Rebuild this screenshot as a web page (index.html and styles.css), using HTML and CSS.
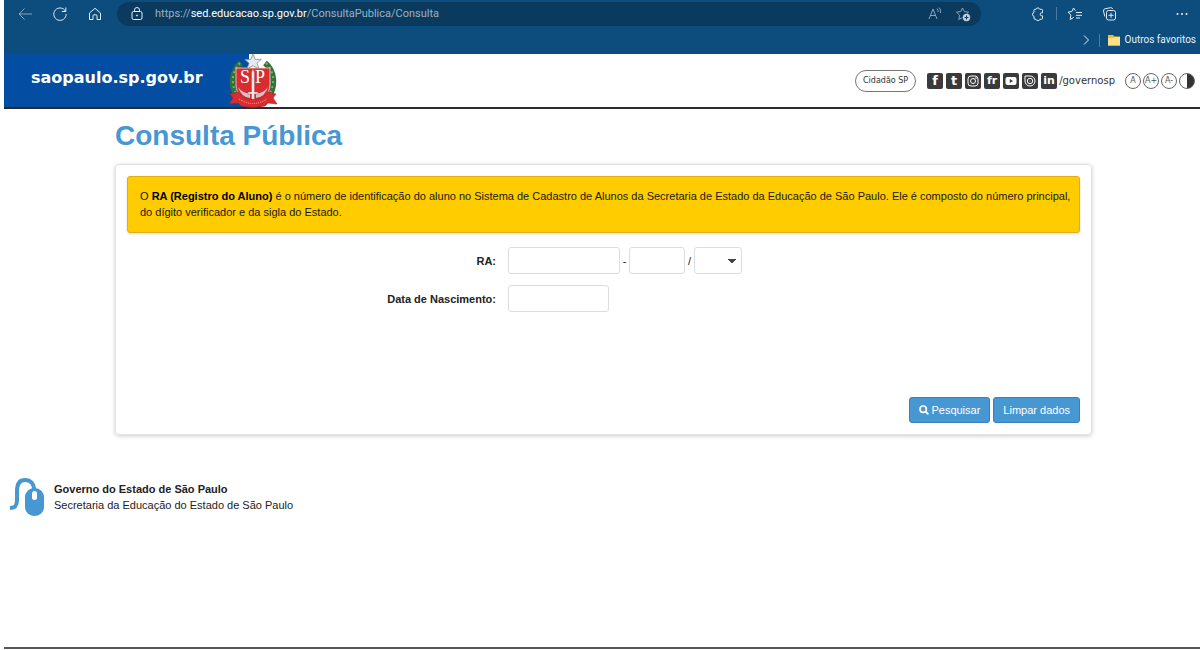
FILE: index.html
```html
<!DOCTYPE html>
<html lang="pt-BR">
<head>
<meta charset="utf-8">
<title>Consulta Pública</title>
<link rel="stylesheet" href="styles.css">
</head>
<body>
<div class="browser">
  <div class="toolbar">
    <button class="tool" aria-label="Voltar"><svg class="dim" viewBox="0 0 16 16"><path d="M15 8H2M7.500 2.500L2 8l5.500 5.500"/></svg></button>
    <button class="tool" aria-label="Atualizar"><svg viewBox="0 0 16 16"><path d="M13.500 5.300A6.200 6.200 0 1 0 14.200 8M13.800 1.500v4h-4"/></svg></button>
    <button class="tool" aria-label="Início"><svg viewBox="0 0 16 16"><path d="M2.500 7L8 2.300 13.500 7v6.500H10V9.800a1 1 0 0 0-1-1H7a1 1 0 0 0-1 1v3.700H2.500z"/></svg></button>
    <div class="address">
      <svg class="lock" viewBox="0 0 16 16"><rect x="3" y="5.500" width="10" height="8" rx="1.500"/><path d="M5.500 5.500V4a2.500 2.500 0 0 1 5 0v1.500"/><circle cx="8" cy="9.500" r=".6"/></svg>
      <span class="url">https://<b>sed.educacao.sp.gov.br</b>/ConsultaPublica/Consulta</span>
      <svg class="dim" viewBox="0 0 16 16"><path d="M2 13L6 3l4 10M3.500 9.500h5M10 2.500q1.500 1.500 1 3.500M12.200 1.500q2.200 2.500 1.300 5.500"/></svg>
      <svg class="dim" viewBox="0 0 16 16"><path d="M7.500 11.500L3.800 13.500l.8-4.300L1.500 6.200l4.200-.6L7.500 2l1.900 3.600 4.100.6-1.500 1.400"/><circle class="disc" cx="11.500" cy="11.500" r="3.700"/><path class="mark" d="M11.500 9.500v4M9.500 11.500h4"/></svg>
    </div>
    <button class="tool puzzle" aria-label="Extensões"><svg viewBox="0 0 16 16"><path d="M5 3.300h1a2 2 0 0 1 3.800 0h1.700a1 1 0 0 1 1 1v2.500h-.8a1.500 1.500 0 0 0 0 3h.8v2.500a1 1 0 0 1-1 1H9.800a2 2 0 0 1-3.800 0H5a1 1 0 0 1-1-1v-2a2 2 0 0 1 0-3.900V4.300a1 1 0 0 1 1-1z"/></svg></button>
    <span class="rule"></span>
    <button class="tool" aria-label="Favoritos"><svg viewBox="0 0 16 16"><path d="M8.500 4.800L6.500 2 4.900 5.500l-3.900.6 2.900 3-.7 4.400 3.500-2.100M9 6.500h6M9 9.300h6M9 12h4"/></svg></button>
    <button class="tool coll" aria-label="Coleções"><svg viewBox="0 0 16 16"><rect x="4.500" y="4.500" width="9" height="9.500" rx="2"/><path d="M9 6.800v5M6.500 9.300h5M2.800 10.500L1.500 5a2 2 0 0 1 1.500-2.200L8.500 1.700a2 2 0 0 1 2.200 1.300"/></svg></button>
    <button class="tool more" aria-label="Mais"><svg viewBox="0 0 16 16"><g class="solid"><circle cx="3.500" cy="8" r="1"/><circle cx="8" cy="8" r="1"/><circle cx="12.500" cy="8" r="1"/></g></svg></button>
  </div>
  <div class="favorites">
    <button class="tool" aria-label="Mostrar mais"><svg viewBox="0 0 16 16"><path d="M6 3.500L10.500 8 6 12.500"/></svg></button>
    <span class="rule faint"></span>
    <svg class="folder" viewBox="0 0 14 14"><path d="M1 2h5l1.500 1.500H13V12.500H1z" fill="#f0b92c"/><path d="M1 5h5.500L8 4h5v8.500H1z" fill="#ffe08a"/></svg>
    <span>Outros favoritos</span>
  </div>
</div>
<div class="page">
  <header class="masthead">
    <div class="brand">
      <a href="#">saopaulo.sp.gov.br</a>
      <svg class="crest" viewBox="0 0 50 54">
        <path d="M13 9C4 16 2 31 9 42M37 9c9 7 11 22 4 33" fill="none" stroke="#2f7140" stroke-width="6"/>
        <path d="M12 9C3 18 3 31 9 41M38 9c9 9 9 22 3 32" fill="none" stroke="#8bad4c" stroke-width="2" stroke-dasharray="2 3"/>
        <path d="M8 14h34v17c0 9-8 15-17 18C16 46 8 40 8 31z" fill="#d92c30" stroke="#f5d9d8" stroke-width=".8"/>
        <path d="M25 0l2.300 5.500 6-.2-4.300 4 2.200 5.700L25 11.700 18.800 15 21 9.300l-4.300-4 6 .2z" fill="#e7e9ec" stroke="#777f87" stroke-width=".7"/>
        <path d="M10 33q5 7 12 6v5q-9-1-12-11zM40 33q-5 7-12 6v5q9-1 12-11z" fill="#d2c4c4"/>
        <path d="M25 15l1.500 3v20H30v2h-3.500v6h-3v-6H20v-2h3.500V18z" fill="#eee8e7" stroke="#9f4544" stroke-width=".4"/>
        <text x="12" y="29">S</text><text x="27" y="29">P</text>
        <path d="M2 40l8-2 5 5q10 5 20 0l5-5 8 2-3 4 4 6-9-1-3 3q-12 3-24 0l-3-3-9 1 4-6z" fill="#d92c30" stroke="#9e2428" stroke-width=".6"/>
        <path d="M11 45q14 9 28 0" fill="none" stroke="#efb3af" stroke-dasharray="1 1"/>
      </svg>
    </div>
    <div class="links">
      <a class="citizen" href="#">Cidadão SP</a>
      <nav class="social" aria-label="Redes sociais">
        <a href="#" class="face">f</a>
        <a href="#" class="face">t</a>
        <a href="#" aria-label="Instagram"><svg viewBox="0 0 16 16"><rect x="3" y="3" width="10" height="10" rx="3"/><circle cx="8" cy="8" r="2.500"/><circle cx="11" cy="5" r=".4"/></svg></a>
        <a href="#" class="pair">fr</a>
        <a href="#" aria-label="YouTube"><svg viewBox="0 0 16 16"><rect class="white" x="2.500" y="4" width="11" height="8" rx="2"/><path class="play" d="M6.800 6v4l3.200-2z"/></svg></a>
        <a href="#" aria-label="Issuu"><svg viewBox="0 0 16 16"><path d="M3 3h5a5 5 0 1 1-5 5z"/><circle cx="8" cy="8" r="2.700"/><circle class="white" cx="8" cy="8" r=".5"/></svg></a>
        <a href="#" class="pair">in</a>
      </nav>
      <span class="handle">/governosp</span>
      <div class="access">
        <button>A</button><button>A+</button><button>A-</button><button class="contrast" aria-label="Contraste"></button>
      </div>
    </div>
  </header>
  <main class="content">
    <h1>Consulta Pública</h1>
    <form class="panel">
      <p class="notice">O <b>RA (Registro do Aluno)</b> é o número de identificação do aluno no Sistema de Cadastro de Alunos da Secretaria de Estado da Educação de São Paulo. Ele é composto do número principal, do dígito verificador e da sigla do Estado.</p>
      <div class="fields">
        <label for="ra">RA:</label>
        <div class="group">
          <input id="ra" class="number" type="text"><span>-</span><input class="digit" type="text" aria-label="Dígito"><span>/</span><select class="state" aria-label="Estado"><option></option><option>SP</option></select>
        </div>
        <label for="birth">Data de Nascimento:</label>
        <div class="group"><input id="birth" class="date" type="text"></div>
      </div>
      <div class="actions">
        <button type="button"><svg viewBox="0 0 12 12"><circle cx="5" cy="5" r="3.800"/><path d="M7.700 7.700L11.300 11.300"/></svg>Pesquisar</button>
        <button type="reset">Limpar dados</button>
      </div>
    </form>
  </main>
  <footer class="footer">
    <svg viewBox="0 0 36 40"><path d="M1 31c5 0 7-2 7-8v-9C8 6 11 3 16 3s9 3 9 10v3" fill="none" stroke="#4797d3" stroke-width="4"/><rect x="16" y="11" width="19" height="28" rx="9" fill="#4797d3"/><rect x="23" y="14" width="5" height="9" rx="2.500" fill="#fff"/></svg>
    <p><b>Governo do Estado de São Paulo</b><br>Secretaria da Educação do Estado de São Paulo</p>
  </footer>
</div>
</body>
</html>
```
FILE: styles.css
```css
* { box-sizing: border-box; }
body {
  margin: 0;
  padding-left: 4px;
  min-height: 100vh;
  display: flex;
  flex-direction: column;
  font: 11px/16px "Liberation Sans", Arial, sans-serif;
  color: #222;
  background: #fff;
}
button { font: inherit; cursor: pointer; }
a { color: inherit; text-decoration: none; }

.browser {
  height: 54px;
  background: #0c4d7d;
  color: #e9f1f7;
  font-family: Roboto, "Open Sans", sans-serif;
}
.browser svg {
  width: 16px;
  height: 16px;
  flex: none;
  display: block;
  fill: none;
  stroke: #e3edf4;
}
.browser .dim { stroke: #8ba5b9; }
.browser .disc { fill: #c3ced7; stroke: none; }
.browser .mark { stroke: #0b3a5f; }
.browser .solid { fill: #e9f1f7; stroke: none; }
.browser .folder { width: 14px; height: 14px; stroke: none; margin-right: 4px; }
.tool { padding: 0; border: 0; background: none; }
.toolbar { display: flex; align-items: center; height: 27px; padding: 0 10px 0 13px; }
.toolbar > .tool + .tool { margin-left: 19px; }
.address {
  flex: 0 1 864px;
  display: flex;
  align-items: center;
  height: 24px;
  margin-left: 14px;
  padding: 0 10px 0 12px;
  border-radius: 12px;
  background: #0b3a5f;
}
.url { flex: 1; margin-left: 10px; color: #9bb0c1; white-space: nowrap; }
.url b { color: #fff; font-weight: 400; }
.address .dim + .dim { margin-left: 12px; }
.puzzle { margin-left: 49px; }
.rule { width: 1px; height: 13px; margin: 0 10px; background: #4b7da2; }
.faint { margin: 0 7px 0 5px; }
.toolbar > .more.tool { margin-left: auto; }
.favorites {
  display: flex;
  align-items: center;
  justify-content: flex-end;
  height: 26px;
  padding-right: 4px;
  font-size: 10px;
}

.page { flex: 1; display: flex; flex-direction: column; border-bottom: 2px solid #555; margin-bottom: 1px; }
.masthead {
  display: flex;
  justify-content: space-between;
  height: 55px;
  border-bottom: 2px solid #2b2a2c;
}
.brand {
  display: flex;
  justify-content: space-between;
  width: 274px;
  padding-left: 27px;
  background: linear-gradient(90deg, #034ea2 245px, #fff 245px);
  color: #fff;
  font: bold 16px/48px "DejaVu Sans", sans-serif;
}
.crest { width: 50px; height: 54px; }
.crest text { font: 18px "Liberation Serif", serif; fill: #fff; }
.links {
  display: flex;
  align-items: center;
  padding-right: 5px;
  font: 10px/16px "DejaVu Sans", sans-serif;
  color: #333;
}
.citizen {
  padding: 2px 7px;
  border: 1px solid #777;
  border-radius: 11px;
  font-size: 8px;
}
.social { display: flex; gap: 3px; margin-left: 11px; }
.social a {
  width: 16px;
  height: 16px;
  border-radius: 2px;
  background: #3a3a3c;
  color: #fff;
  text-align: center;
  font-weight: bold;
}
.social .face { font-size: 13px; }
.social .pair { font-size: 11px; }
.social svg { display: block; width: 16px; height: 16px; fill: none; stroke: #fff; }
.social .white { fill: #fff; stroke: none; }
.social .play { fill: #3a3a3c; stroke: none; }
.handle { margin-left: 2px; }
.access { display: flex; gap: 2px; margin-left: 10px; }
.access button {
  width: 16px;
  height: 16px;
  padding: 0;
  border: 1px solid #666;
  border-radius: 50%;
  background: #fff;
  color: #555;
  font-size: 8px;
  line-height: 14px;
}
.access .contrast { background: linear-gradient(90deg, #fff 50%, #333 50%); }

.content { padding: 9px 108px 0 111px; }
h1 { margin: 0 0 10px; font-size: 28px; line-height: 36px; color: #4797d3; }
.panel {
  padding: 11px;
  border: 1px solid #e2e2e5;
  border-radius: 4px;
  box-shadow: 0 1px 4px #0003;
}
.notice {
  margin: 0;
  padding: 11px 6px 12px 12px;
  border: 1px solid #dfae18;
  border-radius: 3px;
  background: #ffcc00;
  box-shadow: 0 1px 3px #0002;
  color: #201a00;
}
.notice b { color: #000; }
.fields {
  display: grid;
  grid-template-columns: 369px 1fr;
  gap: 11px 12px;
  align-items: center;
  padding-top: 14px;
}
.fields label { text-align: right; font-weight: bold; }
.group { display: flex; align-items: center; }
.group span { width: 9px; text-align: center; }
.group input, .group select {
  height: 27px;
  padding: 0 6px;
  border: 1px solid #ddd;
  border-radius: 3px;
  background: #fff;
  font: inherit;
}
.group .number { width: 112px; }
.group .digit { width: 56px; }
.group .date { width: 101px; }
.group .state {
  width: 48px;
  appearance: none;
  background:
    linear-gradient(45deg, transparent 50%, #444 50%) no-repeat right 9px center / 4px 4px,
    linear-gradient(315deg, transparent 50%, #444 50%) no-repeat right 5px center / 4px 4px;
}
.actions { display: flex; justify-content: flex-end; gap: 3px; padding-top: 85px; }
.actions button {
  display: flex;
  align-items: center;
  height: 26px;
  padding: 0 9px;
  border: 1px solid #3b80b8;
  border-radius: 3px;
  background: #4797d3;
  color: #fff;
}
.actions svg { width: 10px; height: 10px; margin-right: 2px; fill: none; stroke: #fff; stroke-width: 2; }
.footer { display: flex; align-items: center; gap: 9px; margin-top: 42px; padding-left: 5px; }
.footer svg { width: 36px; height: 40px; }
.footer p { margin: 0; }
```
